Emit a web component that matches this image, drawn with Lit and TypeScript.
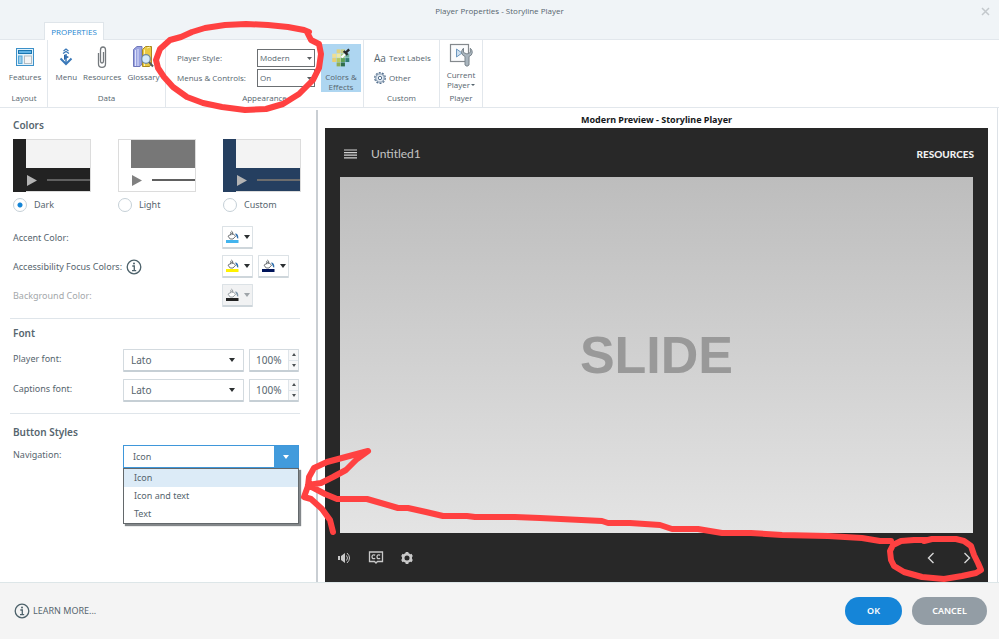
import { LitElement, html, css, svg } from "lit";
import { customElement, property, state } from "lit/decorators.js";
import { classMap } from "lit/directives/class-map.js";

const infoIcon = html`<svg width="16" height="16" viewBox="0 0 16 16" aria-hidden="true">
  <circle cx="8" cy="8" r="6.8" fill="none" stroke="#4d626b" stroke-width="1.3" />
  <circle cx="8" cy="4.6" r="1" fill="#4d626b" />
  <path d="M6.3 7h2v4.6M6 11.7h4.2" fill="none" stroke="#4d626b" stroke-width="1.3" />
</svg>`;

const caret = (w: number, color: string, up = false) => html`<svg
  class="caret" width=${w} height="4" viewBox="0 0 8 4" preserveAspectRatio="none" aria-hidden="true">
  <path d=${up ? "M0 4L4 0L8 4Z" : "M0 0H8L4 4Z"} fill=${color} />
</svg>`;

@customElement("color-picker-button")
class ColorPickerButton extends LitElement {
  @property() color = "#000";
  @property() label = "";
  @property({ type: Boolean }) disabled = false;

  static styles = css`
    button {
      box-sizing: border-box; width: 31px; height: 23px; padding: 0 2px 0 3px;
      display: flex; align-items: center; justify-content: space-between;
      background: #fff; border: 1px solid #dce2e6; border-bottom: 2px solid #ced6db; border-radius: 1px;
    }
    button:disabled { background: #f1f2f3; }
  `;

  render() {
    const ink = this.disabled ? "#8f979c" : "#5c6164";
    return html`<button aria-label=${this.label} ?disabled=${this.disabled}>
      <svg width="13" height="14" viewBox="0 0 13 14" aria-hidden="true">
        <path d="M2 6.2L6.4 3.2L9.6 6.2L7 9H4.2Z" fill="#fff" stroke=${ink} stroke-width=".9" />
        <path d="M4.8 5.4V2Q5.7 .3 6.6 2V5" fill="none" stroke=${ink} stroke-width=".8" />
        <path d="M9 3.6Q12.6 3.6 12.3 8.6Q11 8.8 10.6 6.4Z" fill=${this.disabled ? "#7d95a8" : "#2f6fae"} />
        <rect x="0" y="10" width="12.5" height="3" fill=${this.color} />
      </svg>
      ${caret(6, this.disabled ? "#9fa5a9" : "#2b2f31")}
    </button>`;
  }
}

@customElement("theme-choice")
class ThemeChoice extends LitElement {
  @property() name = "";
  @property() frame = "#222";
  @property() stage = "#f3f3f3";
  @property() line = "#606060";
  @property() arrow = "#b4b4b4";
  @property({ type: Boolean }) selected = false;

  static styles = css`
    label { display: flex; flex-direction: column; gap: 6px; }
    .thumb { display: block; }
    .row { display: flex; align-items: center; gap: 7px; line-height: 14px; }
    input {
      appearance: none; box-sizing: border-box; width: 14px; height: 14px; margin: 0;
      border: 1px solid #c5d0d7; border-radius: 50%; background: #fff;
    }
    input:checked { background: radial-gradient(circle, #1484d6 2px, #fff 3px); }
  `;

  render() {
    return html`<label>
      <svg class="thumb" width="78" height="53" viewBox="0 0 78 53" aria-hidden="true">
        <rect x=".5" y=".5" width="77" height="52" fill=${this.frame} stroke="#dcdcdc" />
        <rect x="0" y="0" width="13" height="53" fill=${this.frame === "#ffffff" ? "none" : this.frame} />
        <rect x="13" y="1" width="64" height="28" fill=${this.stage} />
        <path d="M14 36V47L24 41.5Z" fill=${this.arrow} />
        <rect x="34" y="40" width="43" height="2" fill=${this.line} />
      </svg>
      <span class="row"><input type="radio" name="theme" .checked=${this.selected} />${this.name}</span>
    </label>`;
  }
}

@customElement("app-root")
class AppRoot extends LitElement {
  @state() navigation = "Icon";
  @state() menuOpen = true;

  static styles = css`
    :host {
      display: flex; flex-direction: column; min-height: 100vh; position: relative;
      font: 9px/12px "Noto Sans", "Open Sans", sans-serif; color: #56656e; background: #fff;
      overflow: hidden;
    }
    * { box-sizing: border-box; }
    button, select, input { font: inherit; color: inherit; margin: 0; }
    svg { display: block; flex: none; }
    h1, h2, p { margin: 0; font: inherit; }

    .titlebar, .tabs, .ribbon { font-family: "Open Sans", "Noto Sans", sans-serif; font-size: 8px; }
    .titlebar {
      display: grid; grid-template-columns: 1fr auto 1fr; align-items: center;
      height: 22px; background: #f0f4f7;
    }
    .titlebar h1 { grid-column: 2; }
    .close { justify-self: end; border: 0; background: none; padding: 0 9px; }
    .tabs { display: flex; background: #f0f4f7; padding-left: 44px; border-bottom: 1px solid #e2e7ec; }
    .tab {
      height: 18px; margin-bottom: -1px; padding: 0 6px; border: 1px solid #dfe5ea; border-bottom: 0;
      background: #fff; color: #1f86d1; min-width: 60px;
    }

    .ribbon {
      display: grid; grid-template-columns: 47px 118px 198px 76px 43px; height: 68px;
      border-bottom: 1px solid #e2e7ec; padding-left: 1px;
    }
    .group {
      display: grid; grid-template-rows: 52px 13px; grid-template-columns: 100%; text-align: center;
      border-right: 1px solid #e2e7ec;
    }
    .items { display: flex; align-items: start; justify-content: center; }
    .icons .items { padding-left: 2px; }
    .tool {
      display: flex; flex-direction: column; align-items: center; gap: 4px; white-space: nowrap;
      border: 0; background: none; padding: 4px 3px 0; line-height: 10px;
    }
    .tool svg { height: 24px; }
    .fields {
      display: grid; grid-template-columns: 80px 58px; row-gap: 2px; align-items: center;
      padding-top: 9px; text-align: left;
    }
    .appearance .items { gap: 6px; padding-left: 9px; }
    .fields .box { height: 18px; border: 1px solid #6b6f72; }
    .fields select { padding-left: 2px; }
    .active { background: #aed6f1; width: 40px; height: 48px; margin-top: 4px; padding: 1px 0 0; gap: 3px; }
    .custom .items { flex-direction: column; align-items: start; justify-content: start; padding: 10px 0 0 10px; gap: 5px; }
    .link { display: flex; align-items: center; gap: 3px; border: 0; padding: 0; background: none; height: 15px; }
    .aa { font-size: 10px; }
    .player-tool { padding: 3px 0 0; gap: 3px; }
    .player-tool .more { display: flex; align-items: center; justify-content: center; gap: 1px; }
    .player-tool .caret { height: 2px; }

    .main { display: flex; flex: 1; margin-right: 1px; border-right: 1px solid #dde2e7; }
    .settings { width: 318px; flex: none; padding: 7px 16px 0 13px; border-right: 2px solid #c9ced3; margin-top: 2px; }
    h2 { font-weight: 600; font-size: 10px; line-height: 16px; }
    .themes { display: grid; grid-template-columns: repeat(3, 105px); margin: 6px 0 14px; }
    .colors { display: grid; grid-template-columns: 209px auto; grid-auto-rows: 23px; row-gap: 6px; align-items: center; }
    .pickers { display: flex; gap: 5px; }
    .with-icon { display: flex; align-items: center; gap: 4px; }
    .muted { color: #a3a7aa; }
    hr { border: 0; border-top: 1px solid #dfe5ea; margin: 11px 0 6px -3px; width: 290px; }
    .fonts { display: grid; grid-template-columns: 110px 121px 55px; row-gap: 7px; margin-top: 8px; align-items: center; }
    .fonts > label, .nav > label { padding-bottom: 4px; }
    .fonts .raised { font-size: 10px; }
    .box { position: relative; display: flex; align-items: center; height: 23px; background: #fff; }
    .box .caret { position: absolute; right: 8px; pointer-events: none; }
    .fields .box .caret { right: 2px; height: 3px; }
    select {
      appearance: none; border: 0; background: none; outline: 0; border-radius: 0;
      width: 100%; height: 100%; padding: 0 0 0 7px;
    }
    .raised { border: 1px solid #d3dadf; border-bottom: 2px solid #c6cfd5; border-radius: 1px; }
    .spin { margin-left: 5px; width: 50px; overflow: hidden; }
    .spin input { width: 38px; height: 100%; border: 0; padding: 0 0 0 6px; outline: 0; }
    .steps { display: grid; flex: 1; height: 100%; border-left: 1px solid #dfe5ea; }
    .steps button { border: 0; background: #f7f8f9; padding: 0; display: grid; place-items: center; }
    .steps button + button { border-top: 1px solid #dfe5ea; }
    .spin .steps .caret { position: static; height: 3px; }
    .nav { display: grid; grid-template-columns: 110px 176px; margin-top: 5px; align-items: center; }
    .styles { margin-top: 10px; }
    .combo { border: 1px solid #3f97da; }
    .combo select { padding-left: 9px; }
    .drop { width: 24px; height: 100%; border: 0; background: #429bdc; display: grid; place-items: center; padding: 0; flex: none; }
    .drop .caret { position: static; }
    .list {
      position: absolute; top: 22px; left: -1px; right: -1px; margin: 0; padding: 0; list-style: none;
      background: #fff; border: 1px solid #63686b; box-shadow: 2px 2px 1px #83878a; z-index: 1;
    }
    .list li { height: 18px; line-height: 18px; padding-left: 10px; }
    .list li.on { background: #dcebf7; }

    .preview { flex: 1; display: flex; flex-direction: column; padding: 4px 9px 0 7px; }
    .preview h2 { text-align: center; color: #15181a; font-size: 9px; font-weight: 700; }
    .player {
      flex: 1; display: grid; grid-template-rows: 49px 1fr 49px; background: #282828; color: #c4c4c4;
      font-family: Lato, sans-serif;
    }
    .bar { display: flex; align-items: center; }
    .bar button { border: 0; background: none; padding: 0; }
    .top { padding: 2px 14px 0 19px; gap: 14px; }
    .top p { font-size: 12px; flex: 1; }
    .top .resources { font-size: 10px; font-weight: 900; color: #f0f0f0; }
    .slide {
      display: grid; place-items: center; background: linear-gradient(#bdbdbd, #e4e4e4); margin: 0 15px;
      font: 700 52px/60px "Liberation Sans", sans-serif; color: #999;
    }
    .controls { gap: 16px; padding: 0 17px 0 13px; }
    .prev { margin-left: auto; }
    .controls .next { margin-left: 12px; }

    .footer {
      display: flex; align-items: center; gap: 10px; height: 57px; padding: 0 12px 0 14px;
      background: #f4f4f4; border-top: 1px solid #dde6e8;
    }
    .footer a { display: flex; align-items: center; gap: 3px; color: inherit; text-decoration: none; margin-right: auto; }
    .pill { height: 28px; min-width: 75px; border: 0; border-radius: 14px; color: #fff; font-weight: 600; padding: 0 16px; background: #939da5; }
    .pill.ok { background: #1585d8; min-width: 57px; }
    .ink { position: absolute; inset: 0; width: 100%; pointer-events: none; z-index: 2; }
  `;

  private renderRibbon() {
    return html`<div class="ribbon">
      <section class="group icons">
        <div class="items">
          <button class="tool">
            <svg width="20" viewBox="0 0 20 24" aria-hidden="true">
              <rect x="1.5" y="4.5" width="17" height="17" fill="#e3f2fb" stroke="#3c90c8" />
              <rect x="3.5" y="6.5" width="13" height="3" fill="#62b4e6" stroke="#1b77b1" />
              <rect x="3.5" y="12" width="3.5" height="7.5" fill="#9ccdea" stroke="#52a6d8" />
              <rect x="9.5" y="12" width="7" height="7.5" fill="#f4f4f4" stroke="#b4bcc2" />
            </svg>Features
          </button>
        </div>
        <span>Layout</span>
      </section>
      <section class="group icons">
        <div class="items">
          <button class="tool">
            <svg width="14" viewBox="0 0 14 24" aria-hidden="true" fill="none" stroke="#3a78b8">
              <path d="M4.5 7L7 5L9.5 7M4 9.5L7 7.4L10 9.5" stroke-width="1.2" />
              <path d="M5 10.5L10 13L5 16Z" fill="#2a62a4" stroke="none" />
              <path d="M1.5 14.5L7 20L12.5 14.5" stroke-width="2" />
              <path d="M7 10V19" stroke-width="1.5" />
            </svg>Menu
          </button>
          <button class="tool">
            <svg width="12" viewBox="0 0 12 24" aria-hidden="true" fill="none" stroke="#74797d" stroke-width="1.3">
              <path d="M2.5 9V20Q2.500 23.300 6 23.300Q9.500 23.300 9.500 20V6Q9.500 3 7 3Q4.500 3 4.500 6V17Q4.500 19 6 19Q7.500 19 7.500 17V8" />
            </svg>Resources
          </button>
          <button class="tool">
            <svg width="22" viewBox="0 0 22 24" aria-hidden="true">
              <path d="M1.500 5.500L5 2.500H10V20L8 22.500H1.500Z" fill="#9aa3e0" stroke="#6f77ba" />
              <path d="M3.500 6V22M6 5V22" stroke="#dfe2fa" />
              <path d="M10.500 5.500L13.500 2.500H19.500V20L17.500 22.500H10.500Z" fill="#e9c944" stroke="#a98a20" />
              <path d="M12.500 5.500V22M15 4L18 3" stroke="#fff2a8" />
              <circle cx="14" cy="15" r="4.300" fill="#d5eafa" stroke="#6e8ba3" stroke-width="1.300" />
              <path d="M17.200 18.200L21 22.500" stroke="#555b60" stroke-width="2" />
            </svg>Glossary
          </button>
        </div>
        <span>Data</span>
      </section>
      <section class="group appearance">
        <div class="items">
          <div class="fields">
            <label for="style">Player Style:</label>
            <div class="box"><select id="style"><option>Modern</option><option>Classic</option></select>${caret(5, "#5b5f62")}</div>
            <label for="menus">Menus &amp; Controls:</label>
            <div class="box"><select id="menus"><option>On</option><option>Off</option></select>${caret(5, "#5b5f62")}</div>
          </div>
          <button class="tool active">
            <svg width="20" viewBox="0 0 18 22" aria-hidden="true">
              ${[
                [1, 8, "#f0df92"], [5, 4, "#e2d27c"], [9, 4, "#c9cf86"], [5, 8, "#efe9a0"], [1, 12, "#e9cf6f"],
                [9, 8, "#a5c97e"], [13, 8, "#6fb09c"], [5, 12, "#b6cc62"], [9, 12, "#5fa155"], [13, 12, "#2f7d74"],
                [5, 16, "#8fae54"], [9, 16, "#2f6d4b"],
              ].map(([x, y, c]) => svg`<rect x=${x} y=${y} width="3.600" height="3.600" fill=${c} />`)}
              <path d="M9.500 11.500L13 8" stroke="#fff" stroke-width="2" />
              <path d="M11.500 5.500L15 9M13 7.500L16.500 4" stroke="#26292b" stroke-width="2.200" />
            </svg>
            <span>Colors &amp;<br />Effects</span>
          </button>
        </div>
        <span>Appearance</span>
      </section>
      <section class="group custom">
        <div class="items">
          <button class="link"><span class="aa">Aa</span>Text Labels</button>
          <button class="link">
            <svg width="12" height="12" viewBox="0 0 12 12" aria-hidden="true" fill="none" stroke="#55718f">
              <circle cx="6" cy="6" r="5.300" stroke-dasharray="2 1.300" stroke-width="1.200" />
              <circle cx="6" cy="6" r="4.200" fill="#e6edf4" stroke-width=".8" />
              <circle cx="6" cy="6" r="1.700" fill="#fff" />
            </svg>Other
          </button>
        </div>
        <span>Custom</span>
      </section>
      <section class="group">
        <div class="items">
          <button class="tool player-tool">
            <svg width="24" viewBox="0 0 24 24" aria-hidden="true">
              <rect x="1.500" y="1.500" width="18" height="17" fill="#fbfcfd" stroke="#84898d" stroke-width="1.200" />
              <path d="M7.500 6V14L13 10Z" fill="#cfe0ef" stroke="#6d98c0" />
              <path d="M14.500 5.200Q12.500 7 12.500 9.500Q13 12.500 16 13.500V22Q18 24.500 20 22V13.500Q23 12.500 23.300 9.500Q23.300 7 21.300 5.200V9.500L18 11L14.500 9.500Z" fill="#a9b5be" stroke="#7b858d" />
            </svg>
            <span>Current<span class="more">Player${caret(4, "#56656e")}</span></span>
          </button>
        </div>
        <span>Player</span>
      </section>
    </div>`;
  }

  private renderFontRow(id: string, label: string) {
    return html`
      <label for=${id}>${label}</label>
      <div class="box raised"><select id=${id}><option>Lato</option><option>Open Sans</option></select>${caret(6, "#2b2f31")}</div>
      <div class="box raised spin">
        <input type="text" aria-label="${label} size" value="100%" />
        <div class="steps">
          <button aria-label="Increase">${caret(4, "#4b5053", true)}</button>
          <button aria-label="Decrease">${caret(4, "#4b5053")}</button>
        </div>
      </div>`;
  }

  private renderSettings() {
    const options = ["Icon", "Icon and text", "Text"];
    return html`<div class="settings">
      <h2>Colors</h2>
      <div class="themes">
        <theme-choice name="Dark" selected></theme-choice>
        <theme-choice name="Light" frame="#ffffff" stage="#777777" arrow="#808080"></theme-choice>
        <theme-choice name="Custom" frame="#253f60" line="#6d6d6d"></theme-choice>
      </div>
      <div class="colors">
        <span>Accent Color:</span>
        <div class="pickers"><color-picker-button label="Accent color" color="#42b4ee"></color-picker-button></div>
        <span class="with-icon">Accessibility Focus Colors: ${infoIcon}</span>
        <div class="pickers">
          <color-picker-button label="Focus color 1" color="#fff200"></color-picker-button>
          <color-picker-button label="Focus color 2" color="#00145a"></color-picker-button>
        </div>
        <span class="muted">Background Color:</span>
        <div class="pickers"><color-picker-button label="Background color" color="#222222" disabled></color-picker-button></div>
      </div>
      <hr />
      <h2>Font</h2>
      <div class="fonts">
        ${this.renderFontRow("player-font", "Player font:")}
        ${this.renderFontRow("captions-font", "Captions font:")}
      </div>
      <hr />
      <h2 class="styles">Button Styles</h2>
      <div class="nav">
        <label for="navigation">Navigation:</label>
        <div class="box combo">
          <select id="navigation" .value=${this.navigation}>${options.map((o) => html`<option>${o}</option>`)}</select>
          <button class="drop" aria-label="Show options" @click=${() => (this.menuOpen = !this.menuOpen)}>${caret(6, "#fff")}</button>
          ${this.menuOpen
            ? html`<ul class="list" role="listbox">
                ${options.map(
                  (o) => html`<li role="option" class=${classMap({ on: o === this.navigation })}
                    @click=${() => { this.navigation = o; this.menuOpen = false; }}>${o}</li>`
                )}
              </ul>`
            : null}
        </div>
      </div>
    </div>`;
  }

  private renderPreview() {
    return html`<div class="preview">
      <h2>Modern Preview - Storyline Player</h2>
      <div class="player">
        <div class="bar top">
          <button aria-label="Menu">
            <svg width="13" height="10" viewBox="0 0 13 10" stroke="#d2d2d2" stroke-width="1.2"><path d="M0 1H13M0 3.600H13M0 6.200H13M0 8.800H13" /></svg>
          </button>
          <p>Untitled1</p>
          <button class="resources">RESOURCES</button>
        </div>
        <div class="slide">SLIDE</div>
        <div class="bar controls">
          <button aria-label="Volume">
            <svg width="14" height="12" viewBox="0 0 14 12" fill="none" stroke="#c9c9c9">
              <path d="M0 4H2V8H0ZM3 4L7 1V11L3 8Z" fill="#c9c9c9" stroke="none" />
              <path d="M8.500 3.500Q10.500 6 8.500 8.500M9 1Q14 6 9 11" />
            </svg>
          </button>
          <button aria-label="Captions">
            <svg width="16" height="13" viewBox="0 0 16 13" fill="none" stroke="#c9c9c9" stroke-width="1.300">
              <path d="M1.500 1H14.500V10.500H9.500L8 12L6.500 10.500H1.500Z" />
              <path d="M7.200 4.200Q4 3 4 5.800Q4 8.500 7.200 7.400M12.200 4.200Q9 3 9 5.800Q9 8.500 12.200 7.400" />
            </svg>
          </button>
          <button aria-label="Settings">
            <svg width="14" height="14" viewBox="0 0 14 14" fill="none" stroke="#c9c9c9">
              <circle cx="7" cy="7" r="3.800" stroke-width="2.600" />
              <path d="M7 1V3M7 11V13M1.800 4L3.500 5M10.500 9L12.200 10M1.800 10L3.500 9M10.500 5L12.200 4" stroke-width="2.800" />
            </svg>
          </button>
          <button class="prev" aria-label="Previous">
            <svg width="8" height="12" viewBox="0 0 8 12" fill="none" stroke="#d6d6d6" stroke-width="1.400"><path d="M6.500 1L1.500 6L6.500 11" /></svg>
          </button>
          <button class="next" aria-label="Next">
            <svg width="8" height="12" viewBox="0 0 8 12" fill="none" stroke="#d6d6d6" stroke-width="1.400"><path d="M1.500 1L6.500 6L1.500 11" /></svg>
          </button>
        </div>
      </div>
    </div>`;
  }

  render() {
    return html`
      <header class="titlebar">
        <h1>Player Properties - Storyline Player</h1>
        <button class="close" aria-label="Close">
          <svg width="9" height="9" viewBox="0 0 9 9" stroke="#c3c8cc" stroke-width="1.500"><path d="M1 1L8 8M8 1L1 8" /></svg>
        </button>
      </header>
      <nav class="tabs"><button class="tab">PROPERTIES</button></nav>
      ${this.renderRibbon()}
      <main class="main">${this.renderSettings()}${this.renderPreview()}</main>
      <footer class="footer">
        <a href="#learn">${infoIcon}LEARN MORE...</a>
        <button class="pill ok">OK</button>
        <button class="pill">CANCEL</button>
      </footer>
      <svg class="ink" viewBox="0 0 999 639" fill="none" stroke="#ff4141" stroke-width="6" stroke-linecap="round" stroke-linejoin="round" aria-hidden="true">
        <path d="M309 32L304 30L288 27L268 25L246 24L225 25L205 28L192 32L181 37L170 40L160 49L156 60L158 68L164 77L173 87L187 97L203 103L222 107L245 110L266 109L283 104L299 94L313 80L319 68L321 54L319 44L311 40L307 32" />
        <path d="M891 541L880 541L862 538L828 536L782 535L751 533L722 533L698 529L672 529L660 525L630 523H608L602 521L540 518L515 517H475L467 516H443L426 512L408 508H398L367 499H337L325 494L308 485L321 483L333 477L346 470L357 459L368 451L327 462L314 468L309 477L308 486L304 497L311 499L322 509L330 520L333 532" />
        <path d="M926 540H914L901 541L893 545L890 551L891 560L894 566L904 572L922 577L944 579L962 576L976 573L981 570L978 563L974 555L971 546L964 541L956 539H932L924 541" />
      </svg>
    `;
  }
}
